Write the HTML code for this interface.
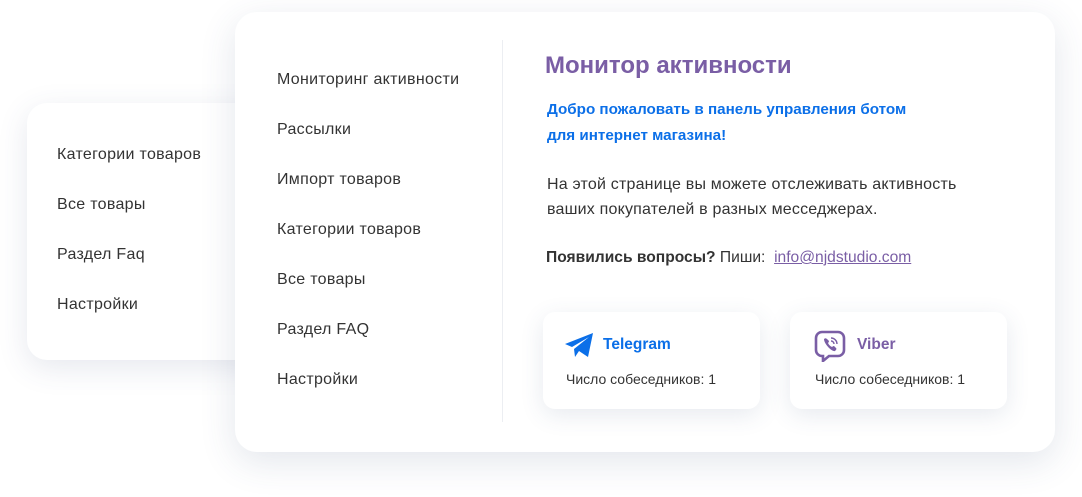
<!DOCTYPE html>
<html><head><meta charset="utf-8"><style>
*{margin:0;padding:0;box-sizing:border-box}
body{width:1082px;height:497px;background:#fff;font-family:"Liberation Sans",Arial,sans-serif;position:relative;overflow:hidden;color:#333}
.back{position:absolute;left:27px;top:103px;width:240px;height:257px;background:#fff;border-radius:20px;box-shadow:0 8px 30px rgba(60,80,120,.13)}
.front{position:absolute;left:235px;top:12px;width:820px;height:440px;background:#fff;border-radius:22px;box-shadow:0 10px 36px rgba(60,80,120,.14)}
.it{position:absolute;font-size:16px;letter-spacing:.3px;color:#333;white-space:nowrap}
.div{position:absolute;left:502px;top:40px;width:1px;height:382px;background:#eceef2}
.t{position:absolute;white-space:nowrap}
.card{position:absolute;top:312px;width:217px;height:97px;background:#fff;border-radius:12px;box-shadow:0 6px 24px rgba(60,80,120,.12)}
</style></head><body>
<div class="back"></div>
<div class="it" style="left:57px;top:146px">Категории товаров</div>
<div class="it" style="left:57px;top:196px">Все товары</div>
<div class="it" style="left:57px;top:246px">Раздел Faq</div>
<div class="it" style="left:57px;top:296px">Настройки</div>
<div class="front"></div>
<div class="it" style="left:277px;top:71px">Мониторинг активности</div>
<div class="it" style="left:277px;top:121px">Рассылки</div>
<div class="it" style="left:277px;top:171px">Импорт товаров</div>
<div class="it" style="left:277px;top:221px">Категории товаров</div>
<div class="it" style="left:277px;top:271px">Все товары</div>
<div class="it" style="left:277px;top:321px">Раздел FAQ</div>
<div class="it" style="left:277px;top:371px">Настройки</div>
<div class="div"></div>
<div class="t" style="left:545px;top:52px;font-size:24px;font-weight:bold;color:#7a5ea5">Монитор активности</div>
<div class="t" style="left:547px;top:97px;font-size:15.2px;font-weight:bold;color:#0b6fe8;line-height:26px">Добро пожаловать в панель управления ботом<br>для интернет магазина!</div>
<div class="t" style="left:547px;top:172px;font-size:16px;letter-spacing:.2px;line-height:25px;color:#333">На этой странице вы можете отслеживать активность<br>ваших покупателей в разных месседжерах.</div>
<div class="t" style="left:546px;top:249px;font-size:15.6px;color:#333"><b>Появились вопросы?</b> Пиши:&nbsp; <span style="color:#7a5ea5;text-decoration:underline">info@njdstudio.com</span></div>
<div class="card" style="left:543px"></div>
<div class="card" style="left:790px"></div>
<svg style="position:absolute;left:565px;top:333px" width="29" height="25" viewBox="0 0 29 25"><path d="M0 11 L28 0 L23 24 L14 18 L10 24 L9 16 L24 4 L7 14 Z" fill="#0b6fe8"/></svg>
<div class="t" style="left:603px;top:336px;font-size:15.5px;font-weight:bold;color:#0b6fe8">Telegram</div>
<div class="t" style="left:566px;top:371px;font-size:14px;color:#333">Число собеседников: 1</div>
<svg style="position:absolute;left:814px;top:330px" width="32" height="32" viewBox="0 0 32 32"><path d="M8 2h16a6 6 0 0 1 6 6v12a6 6 0 0 1-6 6h-9l-6 5v-5H8a6 6 0 0 1-6-6V8a6 6 0 0 1 6-6z" fill="none" stroke="#7a5ea5" stroke-width="2.6"/><path d="M10 9c1-1 2-1 3 0l2 2c0 1-1 2-1 2 1 2 2 3 4 4 0 0 1-1 2-1l2 2c1 1 0 2-1 3-3 1-11-7-11-12z" fill="#7a5ea5"/><path d="M17 8a6 6 0 0 1 6 6M17 11a3 3 0 0 1 3 3" fill="none" stroke="#7a5ea5" stroke-width="1.4"/></svg>
<div class="t" style="left:857px;top:336px;font-size:15.5px;font-weight:bold;color:#7a5ea5">Viber</div>
<div class="t" style="left:815px;top:371px;font-size:14px;color:#333">Число собеседников: 1</div>
</body></html>
